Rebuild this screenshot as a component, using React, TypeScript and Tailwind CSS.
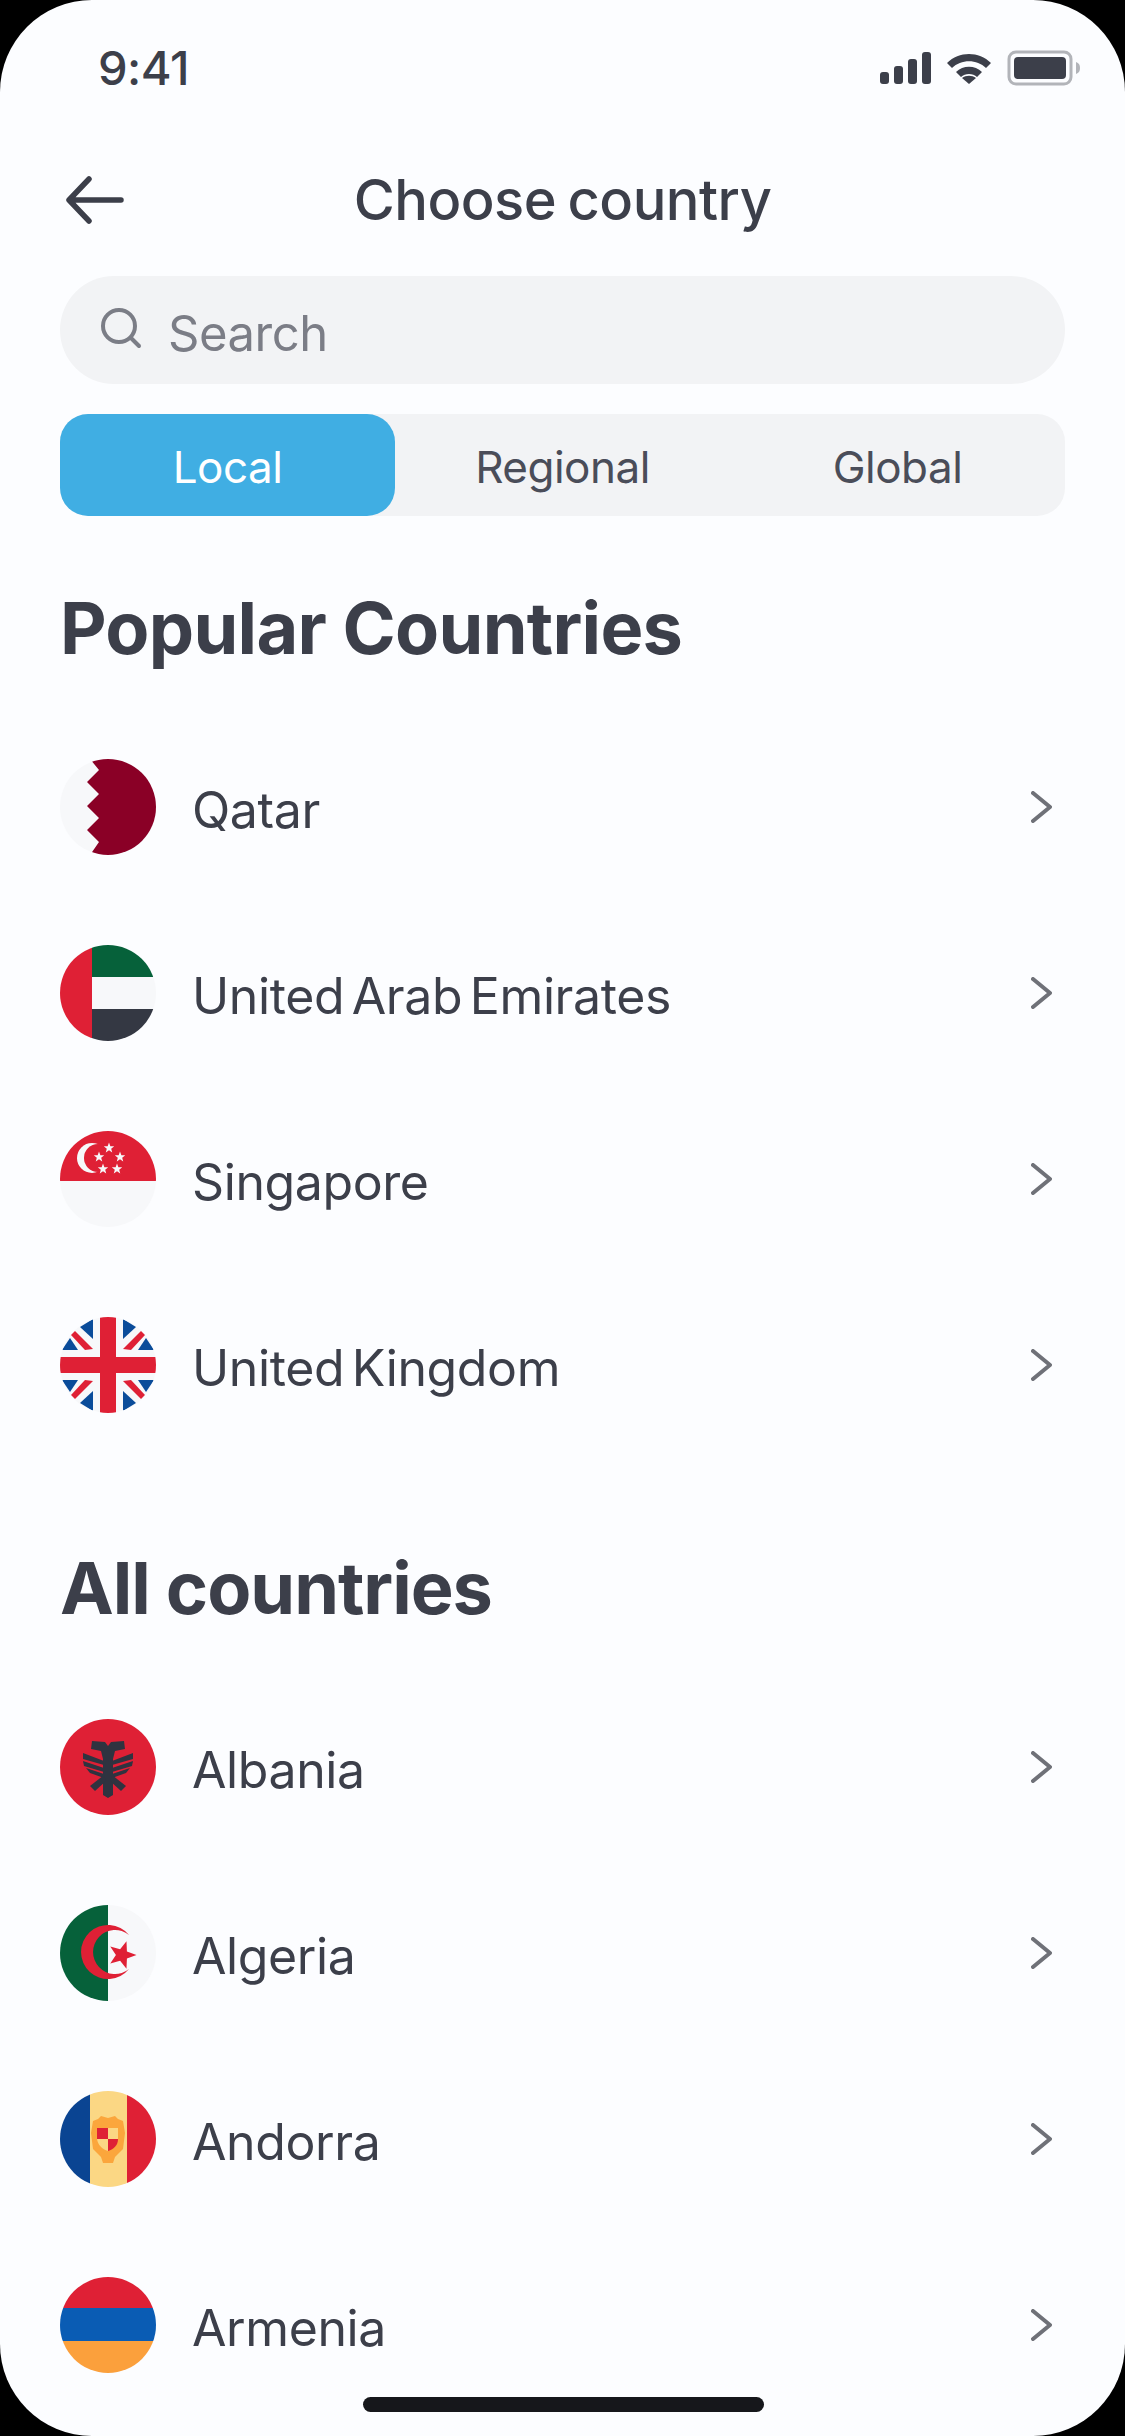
import React from 'react';

const FONT = "font-['Inter','Noto_Sans',sans-serif]";

function Star({ cx, cy, r, fill, rotate = 0 }: { cx: number; cy: number; r: number; fill: string; rotate?: number }) {
  const pts: string[] = [];
  for (let i = 0; i < 10; i++) {
    const rad = i % 2 === 0 ? r : r * 0.42;
    const a = -Math.PI / 2 + (rotate * Math.PI) / 180 + (i * Math.PI) / 5;
    pts.push(`${cx + rad * Math.cos(a)},${cy + rad * Math.sin(a)}`);
  }
  return <polygon points={pts.join(' ')} fill={fill} />;
}

function Flag({ children }: { children: React.ReactNode }) {
  return (
    <div className="w-24 h-24 shrink-0 rounded-full overflow-hidden bg-[#f7f8fa]">
      <svg viewBox="0 0 96 96" className="w-24 h-24 block">
        {children}
      </svg>
    </div>
  );
}

const Qatar = () => (
  <Flag>
    <polygon points="30,0 39,11 27,23 39,35 27,47 39,59 27,71 39,83 30,96 96,96 96,0" fill="#8a0026" />
  </Flag>
);

const Uae = () => (
  <Flag>
    <rect x="32" width="64" height="32" fill="#06613a" />
    <rect x="32" y="64" width="64" height="32" fill="#343843" />
    <rect width="32" height="96" fill="#df2035" />
  </Flag>
);

const Singapore = () => (
  <Flag>
    <rect width="96" height="50" fill="#df2035" />
    <circle cx="32" cy="27" r="15" fill="#f7f8fa" />
    <circle cx="38" cy="27" r="14" fill="#df2035" />
    <Star cx={49} cy={17} r={5.5} fill="#f7f8fa" />
    <Star cx={39} cy={26} r={5.5} fill="#f7f8fa" />
    <Star cx={60} cy={26} r={5.5} fill="#f7f8fa" />
    <Star cx={43} cy={38} r={5.5} fill="#f7f8fa" />
    <Star cx={57} cy={38} r={5.5} fill="#f7f8fa" />
  </Flag>
);

function UkQuarter() {
  return (
    <>
      <polygon points="20,10 33,2 33,22" fill="#0a4c9a" />
      <polygon points="2,33 18,33 10,21" fill="#0a4c9a" />
      <polygon points="11,18 15,14 33,32 25,33" fill="#df2035" />
    </>
  );
}

const Uk = () => (
  <Flag>
    <UkQuarter />
    <g transform="translate(96,0) scale(-1,1)"><UkQuarter /></g>
    <g transform="translate(0,96) scale(1,-1)"><UkQuarter /></g>
    <g transform="translate(96,96) scale(-1,-1)"><UkQuarter /></g>
    <rect x="40" width="16" height="96" fill="#df2035" />
    <rect y="40" width="96" height="16" fill="#df2035" />
  </Flag>
);

const Albania = () => (
  <Flag>
    <rect width="96" height="96" fill="#df2035" />
    <g fill="#2f3340">
      <polygon points="32,22 45,23 48,27 51,23 64,22 65,30 55,32 53,40 53,76 48,79 43,76 43,40 41,32 31,30" />
      <polygon points="23,34 44,42 44,46 23,40" />
      <polygon points="73,34 52,42 52,46 73,40" />
      <polygon points="23,42 44,49 44,53 24,47" />
      <polygon points="73,42 52,49 52,53 72,47" />
      <polygon points="26,49 44,55 44,59 30,54" />
      <polygon points="70,49 52,55 52,59 66,54" />
      <polygon points="30,67 44,56 46,62 35,72" />
      <polygon points="66,67 52,56 50,62 61,72" />
    </g>
  </Flag>
);

const Algeria = () => (
  <Flag>
    <rect width="48" height="96" fill="#06613a" />
    <path d="M69 30A27 27 0 1 0 69 64A22 22 0 1 1 69 30Z" fill="#df2035" />
    <Star cx={62} cy={50} r={14.5} fill="#df2035" rotate={18} />
  </Flag>
);

const Andorra = () => (
  <Flag>
    <rect width="30" height="96" fill="#0a4492" />
    <rect x="30" width="37" height="96" fill="#fbd784" />
    <rect x="67" width="29" height="96" fill="#df2035" />
    <path d="M33 30L38 28L41 25L48 27L55 25L58 28L63 30L65 42L63 58L55 66L53 72L43 72L41 66L33 58L31 42Z" fill="#fba63c" />
    <rect x="37" y="37" width="11" height="11" fill="#df2035" />
    <rect x="48" y="37" width="10" height="11" fill="#fbd784" />
    <path d="M37 48H48V60C42 58 38 54 37 48Z" fill="#fbd784" />
    <path d="M48 48H58C58 54 54 58 48 60Z" fill="#df2035" />
  </Flag>
);

const Armenia = () => (
  <Flag>
    <rect width="96" height="31" fill="#df2035" />
    <rect y="31" width="96" height="33" fill="#0a5cb4" />
    <rect y="64" width="96" height="32" fill="#fba03c" />
  </Flag>
);

function Row({ flag, name }: { flag: React.ReactNode; name: string }) {
  return (
    <div className="flex items-center h-[186px] pl-[60px] pr-[73px]">
      {flag}
      <span className="ml-[36px] flex-1 mt-[6px] text-[50px] leading-[60px] tracking-[-0.4px] [word-spacing:-6px] text-[#3c3f4a]">{name}</span>
      <svg viewBox="0 0 21 32" className="w-[21px] h-8 fill-none stroke-[#6f7178] stroke-[4]">
        <path d="M2 2L19 16L2 30" strokeLinecap="round" strokeLinejoin="round" />
      </svg>
    </div>
  );
}

export default function App() {
  return (
    <div className={`w-[1125px] h-[2436px] bg-black ${FONT}`}>
      <div className="relative w-full h-full rounded-[92px] overflow-hidden bg-[#fcfdff]">
        {/* Status bar */}
        <div className="flex items-center justify-between h-[68px] mt-[34px] pl-[98px] pr-[44px]">
          <span className="text-[47px] font-medium tracking-[-0.5px] text-[#3c3f4a]">9:41</span>
          <div className="flex items-center gap-[15px]">
            <svg viewBox="0 0 51 32" className="w-[51px] h-8 fill-[#3c3f4a]">
              <rect y="20" width="9" height="12" rx="3" />
              <rect x="14" y="14" width="9" height="18" rx="3" />
              <rect x="28" y="7" width="9" height="25" rx="3" />
              <rect x="42" width="9" height="32" rx="3" />
            </svg>
            <svg viewBox="0 0 46 32" className="w-[46px] h-8">
              <path d="M1 11C13 -1 33 -1 45 11L40 16C31 7 15 7 6 16Z" fill="#3c3f4a" />
              <path d="M10 20C17 13 29 13 36 20L31 25C27 21 19 21 15 25Z" fill="#3c3f4a" />
              <path d="M23 32L16 26C20 23 26 23 30 26Z" fill="#3c3f4a" />
            </svg>
            <svg viewBox="0 0 74 36" className="w-[74px] h-9">
              <rect x="2" y="2" width="62" height="32" rx="7" fill="none" stroke="#b2b4b9" strokeWidth="3" />
              <rect x="7" y="7" width="52" height="22" rx="4" fill="#3c3f4a" />
              <path d="M69 12C72 13 73 15 73 18C73 21 72 23 69 24Z" fill="#b2b4b9" />
            </svg>
          </div>
        </div>

        {/* Header */}
        <div className="flex items-center h-[80px] mt-[58px] px-[66px]">
          <svg viewBox="0 0 58 48" className="w-[58px] h-12 fill-none stroke-[#3c3f4a] stroke-[5.5]">
            <path d="M55 24H4M23 3L3 24L23 45" strokeLinecap="round" strokeLinejoin="round" />
          </svg>
          <h1 className="flex-1 text-center text-[56px] font-medium tracking-[-0.5px] [word-spacing:-3px] text-[#3c3f4a]">Choose country</h1>
          <div className="w-[58px]" />
        </div>

        {/* Search */}
        <div className="flex items-center h-[108px] mt-[36px] mx-[60px] pl-[40px] rounded-[54px] bg-[#f2f3f5]">
          <svg viewBox="0 0 42 42" className="w-[42px] h-[42px] -mt-[4px] fill-none stroke-[#7b7d86] stroke-[4]">
            <circle cx="19" cy="19" r="16" />
            <path d="M31 31L39 39" strokeLinecap="round" />
          </svg>
          <span className="ml-[26px] mt-[8px] text-[49px] tracking-[-0.5px] text-[#7b7d86]">Search</span>
        </div>

        {/* Tabs */}
        <div className="flex h-[102px] mt-[30px] mx-[60px] rounded-[28px] bg-[#f2f3f5] text-[44px] tracking-[-0.5px] text-[#4a4d59]">
          <div className="flex-1 flex items-center justify-center pt-[3px] rounded-[28px] bg-[#40aee3] text-white">Local</div>
          <div className="flex-1 flex items-center justify-center pt-[3px]">Regional</div>
          <div className="flex-1 flex items-center justify-center pt-[3px]">Global</div>
        </div>

        <h2 className="mt-[72px] mb-[46px] ml-[60px] text-[72px] leading-[80px] font-bold tracking-[-0.7px] text-[#3c3f4a]">Popular Countries</h2>
        <Row flag={<Qatar />} name="Qatar" />
        <Row flag={<Uae />} name="United Arab Emirates" />
        <Row flag={<Singapore />} name="Singapore" />
        <Row flag={<Uk />} name="United Kingdom" />

        <h2 className="mt-[90px] mb-[46px] ml-[60px] text-[72px] leading-[80px] font-bold tracking-[-1px] text-[#3c3f4a]">All countries</h2>
        <Row flag={<Albania />} name="Albania" />
        <Row flag={<Algeria />} name="Algeria" />
        <Row flag={<Andorra />} name="Andorra" />
        <Row flag={<Armenia />} name="Armenia" />

        {/* Home indicator */}
        <div className="absolute bottom-[24px] left-[363px] w-[401px] h-[15px] rounded-full bg-[#16171b]" />
      </div>
    </div>
  );
}
